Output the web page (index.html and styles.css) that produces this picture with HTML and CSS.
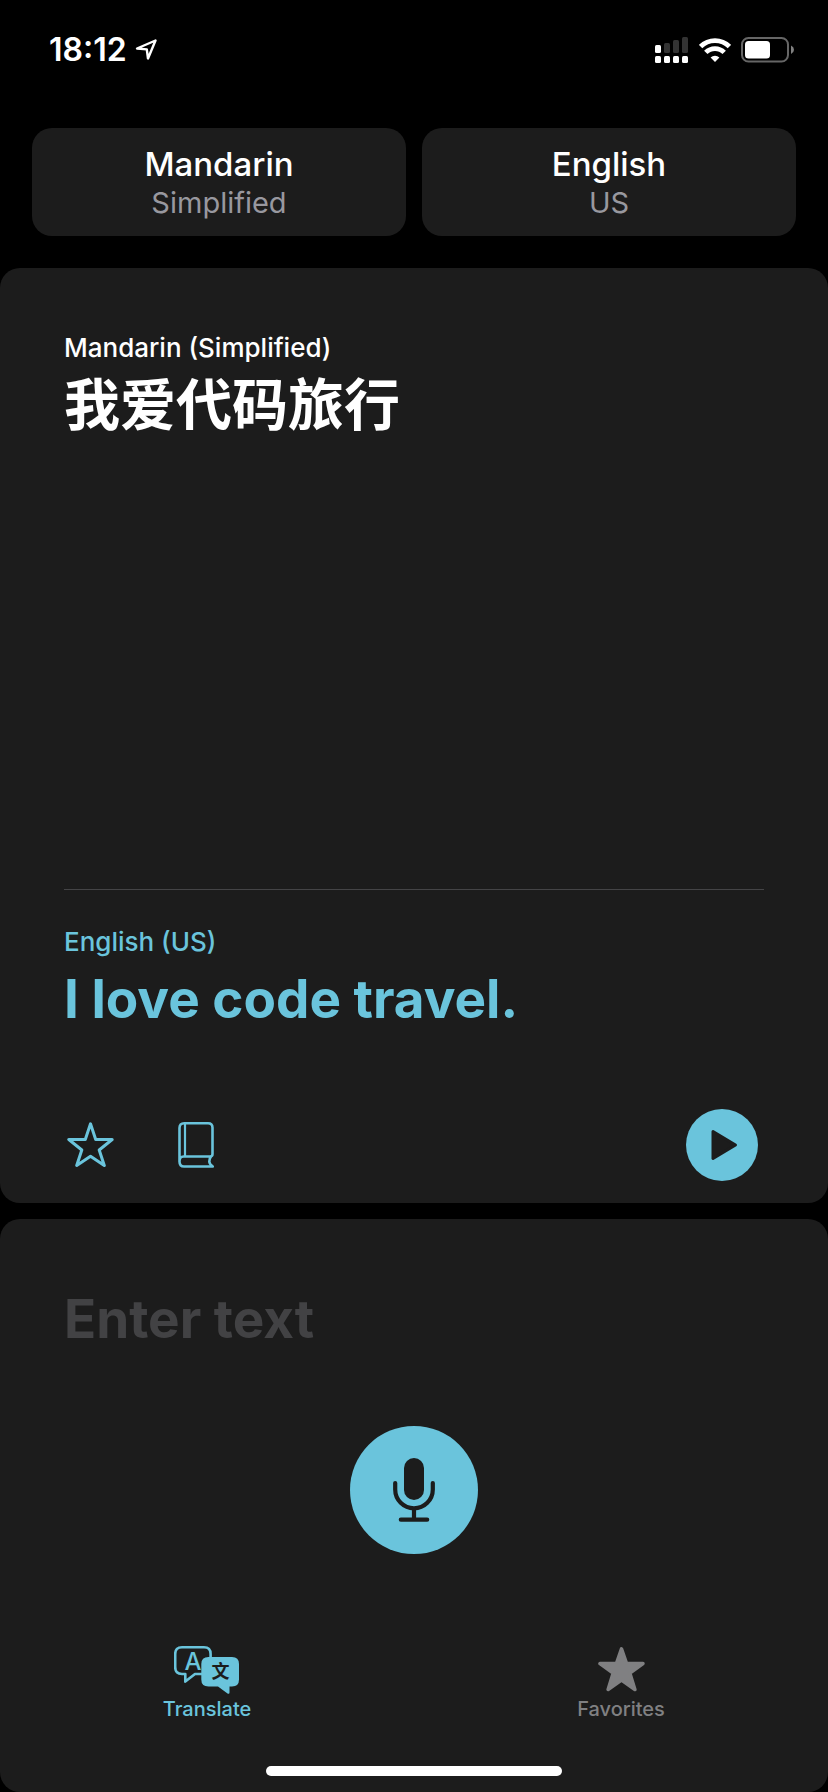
FILE: index.html
```
<!DOCTYPE html>
<html lang="en">
<head>
<meta charset="utf-8">
<meta name="viewport" content="width=device-width, initial-scale=1">
<title>Translate</title>
<link rel="stylesheet" href="styles.css">
</head>
<body>
<div class="app">
  <header class="status">
    <div class="status-group">
      <time class="clock">18:12</time>
      <svg class="location" width="23" height="22" viewBox="0 0 23 22" aria-hidden="true">
        <path d="M2 9.5 20.5 1.5 13 19.5 11.8 10.4Z" fill="none" stroke="currentColor" stroke-width="2.4" stroke-linejoin="round"/>
      </svg>
    </div>
    <div class="status-group status-icons">
      <svg width="34" height="26" viewBox="0 0 34 26" aria-hidden="true">
        <g fill="currentColor">
          <rect x="0" y="8" width="6" height="8" rx="1.5"/>
          <rect x="0" y="19" width="6" height="7" rx="1.5"/>
          <rect x="9" y="19" width="6" height="7" rx="1.5"/>
          <rect x="18" y="19" width="6" height="7" rx="1.5"/>
          <rect x="27" y="19" width="6" height="7" rx="1.5"/>
        </g>
        <g fill="#333333">
          <rect x="9" y="6" width="6" height="10" rx="1.5"/>
          <rect x="18" y="3" width="6" height="13" rx="1.5"/>
          <rect x="27" y="0" width="6" height="16" rx="1.5"/>
        </g>
      </svg>
      <svg width="32" height="25" viewBox="0 0 32 25" aria-hidden="true">
        <g fill="none" stroke="currentColor" stroke-width="4.8">
          <path d="M1.6 8.600A20.4 20.4 0 0 1 30.4 8.600"/>
          <path d="M6.800 14.4A13 13 0 0 1 25.200 14.4"/>
        </g>
        <path d="M16 24 11.6 19.6A6.2 6.2 0 0 1 20.4 19.6Z" fill="currentColor"/>
      </svg>
      <svg width="53" height="26" viewBox="0 0 53 26" aria-hidden="true">
        <rect x="1" y="1" width="46" height="23.500" rx="6.500" fill="none" stroke="#666666" stroke-width="2"/>
        <rect x="4" y="4" width="25" height="17.500" rx="3.500" fill="currentColor"/>
        <path d="M50 8.500Q53 10 53 12.750T50 17Z" fill="#808080"/>
      </svg>
    </div>
  </header>

  <nav class="languages" aria-label="Languages">
    <button class="language" type="button">
      <span class="language-name">Mandarin</span>
      <span class="language-region">Simplified</span>
    </button>
    <button class="language" type="button">
      <span class="language-name">English</span>
      <span class="language-region">US</span>
    </button>
  </nav>

  <main class="panel result">
    <section class="source">
      <h2 class="caption">Mandarin (Simplified)</h2>
      <p class="source-text" lang="zh-Hans">我爱代码旅行</p>
    </section>
    <section class="target">
      <h2 class="caption">English (US)</h2>
      <p class="target-text">I love code travel.</p>
      <div class="actions">
        <button class="action" type="button" aria-label="Favorite">
          <svg width="47" height="46" viewBox="0 0 47 46" aria-hidden="true">
            <path d="M23.500 1.800 28.700 17.500H45.200L32.200 28 37.300 43.500 23.500 34.200 9.700 43.500 14.800 28 1.800 17.500H18.300Z" fill="none" stroke="currentColor" stroke-width="3" stroke-linejoin="round"/>
          </svg>
        </button>
        <button class="action" type="button" aria-label="Dictionary">
          <svg width="37" height="46" viewBox="0 0 37 46" aria-hidden="true">
            <g fill="none" stroke="currentColor" stroke-width="2.600" stroke-linejoin="round">
              <path d="M1.500 40V6Q1.500 1.300 6.200 1.300H30Q34.500 1.300 34.500 5.800V32Q34.500 34.500 32 34.500H5.500Q1.500 34.500 1.500 39.500 1.500 44.500 6 44.500H34.800Q31.300 42 31.300 39.500 31.300 36.500 33.300 34.200"/>
              <path d="M7 1.500V34.500" stroke-width="2.200"/>
            </g>
          </svg>
        </button>
        <button class="play" type="button" aria-label="Play translation">
          <svg width="72" height="72" viewBox="0 0 72 72" aria-hidden="true">
            <path d="M27 22.500 49.500 36 27 49.500Z" fill="currentColor" stroke="currentColor" stroke-width="3" stroke-linejoin="round"/>
          </svg>
        </button>
      </div>
    </section>
  </main>

  <footer class="panel entry">
    <input class="entry-field" type="text" placeholder="Enter text" aria-label="Enter text">
    <button class="mic" type="button" aria-label="Speak">
      <svg width="128" height="128" viewBox="0 0 128 128" aria-hidden="true">
        <rect x="54" y="32" width="20" height="42" rx="10" fill="currentColor"/>
        <path d="M45.200 57V63.500A18.800 18.800 0 0 0 82.800 63.500V57M64 82.300V93.700M50.800 93.700H77.200" fill="none" stroke="currentColor" stroke-width="4.200" stroke-linecap="round"/>
      </svg>
    </button>
    <nav class="tabs" aria-label="Sections">
      <a class="tab tab-active" href="#translate" aria-current="page">
        <svg width="66" height="48" viewBox="0 0 66 48" aria-hidden="true">
          <path d="M29 28H21L11.300 35.600V28H8Q1.200 28 1.200 21V8Q1.200 1.300 8 1.300H30Q36.600 1.300 36.600 8V13" fill="none" stroke="currentColor" stroke-width="2.600" stroke-linejoin="round"/>
          <text class="glyph-latin" x="19" y="24" text-anchor="middle">A</text>
          <path d="M34.500 11H58Q65 11 65 18V33.500Q65 40.500 58 40.500H55.500V46.500Q55.500 48.500 53.500 47.500L44 40.500H34.500Q27.300 40.500 27.300 33.500V18Q27.300 11 34.500 11Z" fill="currentColor"/>
          <text class="glyph-han" x="46.500" y="32" text-anchor="middle">文</text>
        </svg>
        <span>Translate</span>
      </a>
      <a class="tab" href="#favorites">
        <svg width="47" height="48" viewBox="0 1 47 48" aria-hidden="true">
          <path d="M23.500 3.800 28.600 18.600H45L31.900 28.200 36.900 44.500 23.500 35 10.100 44.500 15.100 28.200 2 18.600H18.400Z" fill="currentColor" stroke="currentColor" stroke-width="3.500" stroke-linejoin="round"/>
        </svg>
        <span>Favorites</span>
      </a>
    </nav>
    <div class="home-indicator"></div>
  </footer>
</div>
</body>
</html>
```
FILE: styles.css
```
:root {
  --accent: #6ac4dc;
  --surface: #1c1c1c;
  --muted: #98989f;
}

* {
  box-sizing: border-box;
}

body {
  margin: 0;
  background: #000;
  color: #fff;
  font-family: Inter, "Noto Sans CJK SC", sans-serif;
}

h2,
p {
  margin: 0;
}

button {
  border: 0;
  padding: 0;
  font: inherit;
  color: inherit;
  background: none;
  cursor: pointer;
}

svg {
  display: block;
}

.app {
  display: flex;
  flex-direction: column;
  min-height: 100vh;
}

.status {
  display: flex;
  justify-content: space-between;
  align-items: center;
  padding: 30px 34px 58px 49px;
}

.status-group {
  display: flex;
  align-items: center;
  gap: 8px;
}

.status-icons {
  gap: 10px;
}

.clock {
  font-size: 32px;
  font-weight: 600;
  line-height: 40px;
}

.languages {
  display: grid;
  grid-template-columns: 1fr 1fr;
  gap: 16px;
  padding: 0 32px;
}

.language {
  display: flex;
  flex-direction: column;
  align-items: center;
  padding: 15px;
  border-radius: 20px;
  background: var(--surface);
}

.language-name {
  font-size: 33px;
  font-weight: 450;
  line-height: 42px;
}

.language-region {
  font-size: 29px;
  line-height: 36px;
  color: var(--muted);
}

.panel {
  border-radius: 20px;
  background: var(--surface);
}

.result {
  flex: 1;
  display: flex;
  flex-direction: column;
  margin: 32px 0 16px;
  padding: 64px 64px 22px;
}

.source {
  flex: 1;
}

.caption {
  font-size: 26px;
  font-weight: 500;
  line-height: 32px;
}

.source-text {
  font-family: "Noto Sans CJK SC", sans-serif;
  font-size: 56px;
  font-weight: 700;
  line-height: 74px;
}

.target {
  border-top: 1px solid #444446;
  padding-top: 36px;
  color: var(--accent);
}

.target-text {
  font-size: 53px;
  font-weight: 700;
  line-height: 82px;
}

.actions {
  display: flex;
  align-items: center;
  gap: 54px;
  margin-top: 69px;
  padding-right: 6px;
}

.action {
  display: grid;
  place-items: center;
  width: 52px;
  height: 52px;
}

.play,
.mic {
  border-radius: 50%;
  background: var(--accent);
  color: var(--surface);
}

.play {
  margin-left: auto;
}

.entry {
  display: flex;
  flex-direction: column;
  align-items: center;
  padding: 60px 0 16px;
}

.entry-field {
  width: 100%;
  height: 80px;
  padding: 0 64px;
  border: 0;
  outline: 0;
  background: none;
  color: #fff;
  font: 700 53px/80px Inter, "Noto Sans CJK SC", sans-serif;
}

.entry-field::placeholder {
  color: #424244;
  opacity: 1;
}

.mic {
  margin-top: 67px;
}

.tabs {
  display: grid;
  grid-template-columns: 1fr 1fr;
  width: 100%;
  margin-top: 92px;
}

.tab {
  display: flex;
  flex-direction: column;
  align-items: center;
  gap: 3px;
  color: #808082;
  font-size: 20px;
  font-weight: 500;
  line-height: 24px;
  text-decoration: none;
}

.tab-active {
  color: var(--accent);
}

.glyph-latin {
  fill: currentColor;
  font: 500 24px Inter, sans-serif;
}

.glyph-han {
  fill: var(--surface);
  font: 700 18px "Noto Sans CJK SC", sans-serif;
}

.home-indicator {
  width: 296px;
  max-width: 60%;
  height: 10px;
  margin-top: 45px;
  border-radius: 5px;
  background: #fff;
}
```
